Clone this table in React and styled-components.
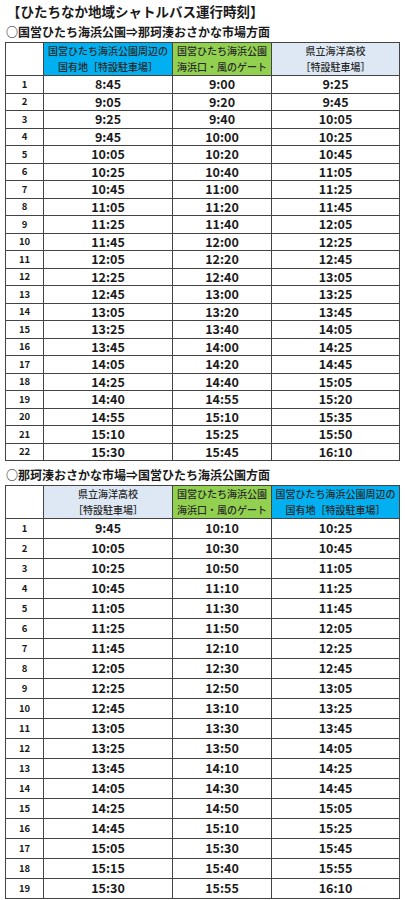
import React from 'react';
import styled, { createGlobalStyle } from 'styled-components';

const GlobalStyle = createGlobalStyle`
  html, body {
    margin: 0;
    padding: 0;
    background: #fff;
  }
  body {
    font-family: "Noto Sans CJK JP", "Noto Sans", sans-serif;
    color: #1a1a1a;
  }
`;

const Page = styled.div`
  width: 405px;
  padding: 0 0 0 5px;
  box-sizing: border-box;
`;

const Title = styled.h1`
  margin: 0;
  padding-left: 2px;
  font-size: 13.5px;
  font-weight: 700;
  line-height: 22px;
  letter-spacing: 0;
`;

const Subtitle = styled.h2`
  margin: ${({ $top }) => $top || 0}px 0 0;
  padding-left: 1px;
  font-size: 12px;
  font-weight: 700;
  line-height: 20px;
`;

const Table = styled.table`
  width: 394px;
  border-collapse: collapse;
  table-layout: fixed;
  border: 1px solid #333;
`;

const HeadCell = styled.th`
  height: ${({ $h }) => $h}px;
  padding: 0;
  border: 1px solid #444;
  background: ${({ $bg }) => $bg || '#fff'};
  font-size: 10px;
  font-weight: 500;
  line-height: 16px;
  color: #2a2a2a;
  text-align: center;
  vertical-align: middle;
`;

const NumCell = styled.td`
  height: ${({ $h }) => $h}px;
  padding: 0;
  border: 1px solid #444;
  font-size: 9.5px;
  font-weight: 700;
  text-align: center;
  vertical-align: middle;
  line-height: 1;
`;

const TimeCell = styled.td`
  padding: 0;
  border: 1px solid #444;
  font-size: 12.5px;
  font-weight: 700;
  text-align: center;
  vertical-align: middle;
  line-height: 1;
`;

const BLUE = '#00b0f0';
const GREEN = '#92d050';
const PALE = '#dde8f4';

const park = { bg: BLUE, label: ['国営ひたち海浜公園周辺の', '国有地［特設駐車場］'] };
const gate = { bg: GREEN, label: ['国営ひたち海浜公園', '海浜口・風のゲート'] };
const school = { bg: PALE, label: ['県立海洋高校', '［特設駐車場］'] };

const outbound = [
  ['8:45', '9:00', '9:25'],
  ['9:05', '9:20', '9:45'],
  ['9:25', '9:40', '10:05'],
  ['9:45', '10:00', '10:25'],
  ['10:05', '10:20', '10:45'],
  ['10:25', '10:40', '11:05'],
  ['10:45', '11:00', '11:25'],
  ['11:05', '11:20', '11:45'],
  ['11:25', '11:40', '12:05'],
  ['11:45', '12:00', '12:25'],
  ['12:05', '12:20', '12:45'],
  ['12:25', '12:40', '13:05'],
  ['12:45', '13:00', '13:25'],
  ['13:05', '13:20', '13:45'],
  ['13:25', '13:40', '14:05'],
  ['13:45', '14:00', '14:25'],
  ['14:05', '14:20', '14:45'],
  ['14:25', '14:40', '15:05'],
  ['14:40', '14:55', '15:20'],
  ['14:55', '15:10', '15:35'],
  ['15:10', '15:25', '15:50'],
  ['15:30', '15:45', '16:10'],
];

const inbound = [
  ['9:45', '10:10', '10:25'],
  ['10:05', '10:30', '10:45'],
  ['10:25', '10:50', '11:05'],
  ['10:45', '11:10', '11:25'],
  ['11:05', '11:30', '11:45'],
  ['11:25', '11:50', '12:05'],
  ['11:45', '12:10', '12:25'],
  ['12:05', '12:30', '12:45'],
  ['12:25', '12:50', '13:05'],
  ['12:45', '13:10', '13:25'],
  ['13:05', '13:30', '13:45'],
  ['13:25', '13:50', '14:05'],
  ['13:45', '14:10', '14:25'],
  ['14:05', '14:30', '14:45'],
  ['14:25', '14:50', '15:05'],
  ['14:45', '15:10', '15:25'],
  ['15:05', '15:30', '15:45'],
  ['15:15', '15:40', '15:55'],
  ['15:30', '15:55', '16:10'],
];

const Timetable = ({ stops, rows, headH, rowH }) => (
  <Table>
    <colgroup>
      <col style={{ width: 38 }} />
      <col style={{ width: 129 }} />
      <col style={{ width: 99 }} />
      <col style={{ width: 128 }} />
    </colgroup>
    <thead>
      <tr>
        <HeadCell $h={headH} />
        {stops.map((s, i) => (
          <HeadCell key={i} $h={headH} $bg={s.bg}>
            {s.label[0]}
            <br />
            {s.label[1]}
          </HeadCell>
        ))}
      </tr>
    </thead>
    <tbody>
      {rows.map((r, i) => (
        <tr key={i}>
          <NumCell $h={rowH}>{i + 1}</NumCell>
          {r.map((t, j) => (
            <TimeCell key={j}>{t}</TimeCell>
          ))}
        </tr>
      ))}
    </tbody>
  </Table>
);

const App = () => (
  <>
    <GlobalStyle />
    <Page>
      <Title>【ひたちなか地域シャトルバス運行時刻】</Title>
      <Subtitle>○国営ひたち海浜公園⇒那珂湊おさかな市場方面</Subtitle>
      <Timetable stops={[park, gate, school]} rows={outbound} headH={30} rowH={16.5} />
      <Subtitle $top={4}>○那珂湊おさかな市場⇒国営ひたち海浜公園方面</Subtitle>
      <Timetable stops={[school, gate, park]} rows={inbound} headH={31} rowH={19} />
    </Page>
  </>
);

export default App;
